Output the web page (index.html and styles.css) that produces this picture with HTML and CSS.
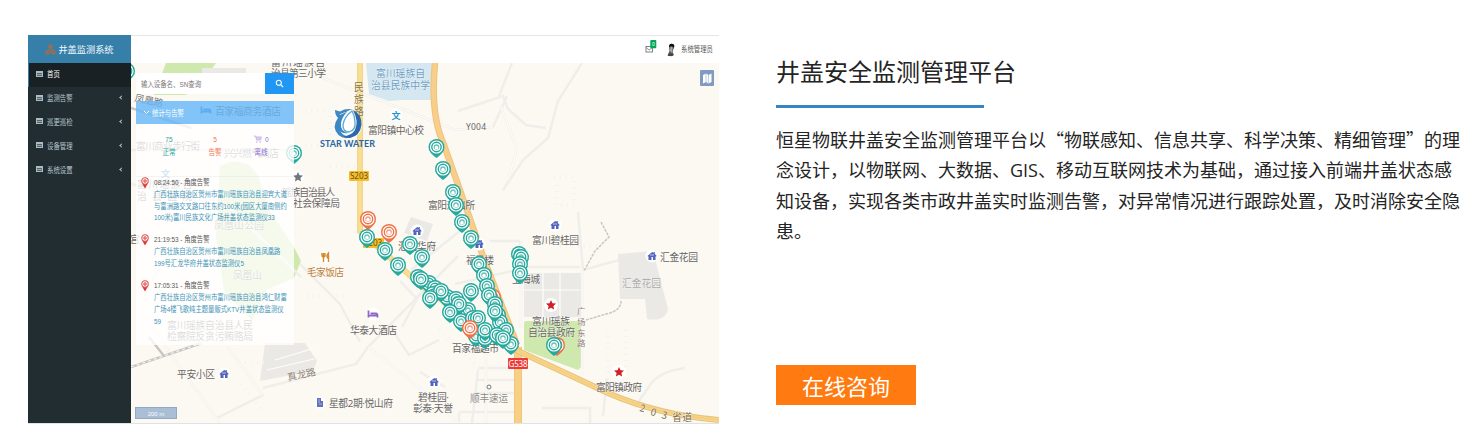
FILE: index.html
```html
<!DOCTYPE html>
<html lang="zh-CN">
<head>
<meta charset="utf-8">
<title>井盖安全监测管理平台</title>
<link rel="stylesheet" href="styles.css">
</head>
<body>
<main class="feature">
  <section class="dashboard">
    <aside class="sidebar">
      <div class="brand">
        <svg class="brand-icon" viewBox="0 0 12 12"><path d="M4.500 5V2.500a1.500 1.500 0 013 0V5M4.500 6L1.300 8.500a1.400 1.400 0 001.500 2.300L6 9M7.500 6l3.200 2.500a1.400 1.400 0 01-1.500 2.300L6 9" fill="none" stroke="#b8693a" stroke-width="1.300"/><path d="M6 3v4l-3 2M6 7l3 2" fill="none" stroke="#b8693a"/></svg>
        <span>井盖监测系统</span>
      </div>
      <nav class="menu">
        <a class="item active"><i class="table-icon"></i><span class="item-label">首页</span></a>
        <a class="item"><i class="table-icon"></i><span class="item-label">监测告警</span><i class="caret"></i></a>
        <a class="item"><i class="table-icon"></i><span class="item-label">巡更巡检</span><i class="caret"></i></a>
        <a class="item"><i class="table-icon"></i><span class="item-label">设备管理</span><i class="caret"></i></a>
        <a class="item"><i class="table-icon"></i><span class="item-label">系统设置</span><i class="caret"></i></a>
      </nav>
    </aside>
    <div class="content">
      <header class="topbar">
        <svg class="mail" viewBox="0 0 12 14"><rect x="1" y="6.500" width="6.500" height="5.500" fill="#fff" stroke="#777" stroke-width=".9"/><path d="M1 7.500l3.200 2.500 3.300-2.500" fill="none" stroke="#777" stroke-width=".8"/><rect x="5.300" y="0" width="6" height="8.200" rx="1" fill="#00a65a"/><text x="8.300" y="6" class="badge">0</text></svg>
        <svg class="avatar" viewBox="0 0 10 14"><path d="M3 3Q4 0 7 1.200Q9 3 7.500 6L6.500 9L8 12Q6 14 1.500 12.500L3.500 8z" fill="#555"/><path d="M3 4Q3 .2 7 1Q9 2 8 4.500L5.500 3z" fill="#111"/><path d="M4.500 4h2v3l-1 3-1.500-2z" fill="#aaa"/><path d="M2 12h5" stroke="#333"/></svg>
        <span class="user">系统管理员</span>
      </header>
      <div class="map-area">
        <svg class="map" viewBox="131 63 588 360" preserveAspectRatio="none">
          <defs>
            <g id="pin"><path d="M-7.700 2Q-6 6.800 0 11Q6 6.800 7.700 2z" fill="currentColor"/><circle r="8" fill="currentColor"/><circle r="6" fill="none" stroke="#fff" stroke-width="1.200"/><circle r="3.400" fill="#fff" fill-opacity=".3" stroke="#fff" stroke-width="1.200"/><path d="M-1.600 2.200V.3a1.600 1.600 0 013.200 0v1.900z" fill="#fff"/></g>
            <g id="home"><circle r="6.500" fill="#fff"/><path d="M-4.300-.3L.2-4l1.300 1V-4h1.300v2L4.400-.5v1H3.500V4H1V1h-1.500v3h-3V.6h-.8z" fill="#5365bb"/><path d="M-2-1h4" stroke="#fff" stroke-width=".6"/></g>
            <path id="star" d="M0-5l1.500 3.200 3.500.4-2.600 2.400.7 3.600L0 2.800-3.100 4.600l.7-3.600L-5-1.400l3.500-.4z"/>
            <g id="bed"><circle r="6.500" fill="#fff"/><path d="M-4.500-3.500v7M-4.500 1.700h9v1.800M-2.500-.5H3q1.500 0 1.500 2" fill="none" stroke="currentColor" stroke-width="1.800"/></g>
          </defs>
          <rect x="131" y="63" width="588" height="361" fill="#fcf9f2"/>
          <g fill="#cfe8ad">
            <path d="M166 63h50l-10 14-20 18h-32z"/>
            <path d="M220 166q25-12 38 10l12 35 24 36 7 14-7 17-28 12-14 31-28-30-8-54z"/>
            <path d="M526 321h53q3 0 3 3v42l-4 4-54-20v-26q0-3 2-3z"/>
          </g>
          <g fill="#eae9e5">
            <path d="M265 343h40l12 18-4 10-53 10z"/>
            <path d="M524 273h57v44h-57zM618 254l35-3 15 58q-2 13-21 10l-2-20h-25zM411 217l22 7-6 17-23-8z"/>
            <path d="M202 68h44v22h-44z"/>
          </g>
          <path d="M366 63h66v37l-30 0-13 1-20-7z" fill="#d5e7f0"/>
          <g fill="none" stroke="#f0eeea" stroke-width="2.500">
            <path d="M131 184l100 25 70 68M150 325l70 98M227 346l36 49-46 23M263 388l93-24 12-17 90-91M368 347l51 40 40 36M300 264l40 40 20 38M320 77l95 37 40 16 38-3 14-31M458 111l45-15 5 13 18 16 20 3M582 63l-24 38-10 37-25 22-20 30M499 96l13-33M500 105l17 43-8 30M578 212l5 58 36-10M490 241h30v26h60M521 240v88M582 270v105M455 284l66-15M411 270l50-40M131 150h160M152 280l32-50"/>
            <path d="M486 330v93M478 370l-6 53M478 368h38M478 380h38M473 393h43M459 412h55M459 412v11M542 408h48v15M603 416l4-38M635 407l15-22q10-14 35-17M400 281l17 18-15 28M389 325l20 30 30-15M420 372l25 15"/>
          </g>
          <g fill="none" stroke="#fefdfb" stroke-width="1.200">
            <path d="M150 325l70 98M227 346l36 49M368 347l51 40 40 36M320 77l95 37 40 16 38-3M500 105l17 43-8 30M521 240v88M582 270v105M524 290h56M543 273v44M560 273v44M486 330v93M275 360l40-12M267 370l47-11"/>
          </g>
          <g fill="none" stroke="#f4f3ef" stroke-width="4" stroke-dasharray="1 5">
            <path d="M554 177h20v28h-17v-25M305 111h25v35h-30M330 166h36M307 296h42M245 363h20M240 385l22 25M608 330v50M626 330v60M560 246h40M439 330l40 38"/>
          </g>
          <path d="M131 367l71-24M149 337l15 19M131 108l60 20" fill="none" stroke="#c8c6c3" stroke-width="2.400"/>
          <path d="M131 367l71-24" fill="none" stroke="#f4f4f4" stroke-width="1.200" stroke-dasharray="3 3"/>
          <path d="M601 222l8 15-14 14-11 20M586 320l20-6q15-3 15-13" fill="none" stroke="#c9c7c4" stroke-width="1.500" stroke-dasharray="3 1"/>
          <path d="M360 63v170M360 231l63 56 92 64" fill="none" stroke="#efd591" stroke-width="6"/>
          <path d="M360 63v170M360 231l63 56 92 64" fill="none" stroke="#f9dd91" stroke-width="4"/>
          <path d="M435 63Q430 115 444 145Q465 204 485 262L517 345" fill="none" stroke="#efc27c" stroke-width="6.500"/>
          <path d="M435 63Q430 115 444 145Q465 204 485 262L517 345" fill="none" stroke="#f8ce8a" stroke-width="4.500"/>
          <path d="M518 347v77" stroke="#efc67e" stroke-width="8"/><path d="M518 347v77" stroke="#f9cf86" stroke-width="6"/>
          <path d="M516 350l92 43q50 22 111 27" fill="none" stroke="#e8c37a" stroke-width="6"/>
          <path d="M516 350l92 43q50 22 111 27" fill="none" stroke="#f9d58a" stroke-width="4"/>
          <path d="M516 350l92 43q50 22 111 27" fill="none" stroke="#ecc67a" stroke-width=".7"/>
          <g class="road-shield"><rect x="349" y="171" width="20" height="10" rx="1" fill="#f5bd28"/><text x="359" y="179.300" textLength="18" fill="#68501c">S203</text><rect x="363" y="238" width="21" height="10" rx="1" fill="#f5bd28"/><text x="373" y="246.300" textLength="18" fill="#68501c">S203</text><rect x="508" y="358" width="20" height="11" rx="1" fill="#ed3838"/><text x="518" y="366.700" textLength="19" fill="#fff">G538</text></g>
          <g class="poi">
            <text x="271" y="66" textLength="54">富川瑶族自</text><text x="271" y="77" textLength="55">治县第三小学</text>
            <g fill="#6d9fc4"><text x="376" y="76.500" textLength="49">富川瑶族自</text><text x="371" y="88.500" textLength="59">治县民族中学</text></g>
            <g fill="#8b743c"><text x="354" y="91">民</text><text x="354" y="102.500">族</text><text x="354" y="114.500">路</text></g>
            <text x="368" y="133.500" textLength="56">富阳镇中心校</text>
            <text x="466" y="130" textLength="20" class="latin">Y004</text>
            <text x="282" y="195.500" textLength="53">瑶族自治县人</text><text x="293" y="207" textLength="47">社会保障局</text>
            <text x="428" y="209" textLength="47">富阳派出所</text>
            <text x="398" y="250" textLength="38">汇龙华府</text>
            <text x="466" y="264" textLength="28">福景楼</text>
            <text x="307" y="275.500" textLength="37" fill="#bd7e39">毛家饭店</text>
            <text x="532" y="244" textLength="47">富川碧桂园</text>
            <text x="660" y="260.500" textLength="38">汇金花园</text>
            <text x="622" y="287" textLength="39" fill="#aaa9a7">汇金花园</text>
            <text x="512" y="282.500" textLength="28">上海城</text>
            <text x="532" y="324.500" textLength="38">富川瑶族</text><text x="528" y="336" textLength="47">自治县政府</text>
            <g fill="#94817b" class="small"><text x="577" y="314">广</text><text x="577" y="325">场</text><text x="577" y="336">东</text><text x="577" y="346">路</text></g>
            <text x="452" y="352" textLength="47">百家福超市</text>
            <text x="350" y="333.500" textLength="47">华泰大酒店</text>
            <text x="177" y="378" textLength="38">平安小区</text>
            <text x="329" y="407" textLength="64" class="mixed">星都2期·悦山府</text>
            <text x="418" y="401" textLength="31" class="mixed">碧桂园·</text><text x="413" y="412" textLength="40" class="mixed">彰泰·天誉</text>
            <text x="470" y="402" textLength="38" fill="#8d8b89">顺丰速运</text>
            <text x="596" y="391" textLength="46">富阳镇政府</text>
            <text x="288" y="381" textLength="29" fill="#8f8277" transform="rotate(-12 288 381)">真龙路</text>
            <g fill="#7b6b45"><text x="639" y="411" transform="rotate(14 639 411)">2</text><text x="650" y="415" transform="rotate(14 650 415)">0</text><text x="661" y="418" transform="rotate(14 661 418)">3</text><text x="672" y="421" textLength="20">省道</text></g>
            <text x="134" y="101" textLength="29" transform="rotate(12 134 101)" fill="#77716c">凤凰路</text>
            <text x="215" y="115" textLength="66">百家福商务酒店</text><text x="136" y="150" textLength="64">富川商业步行街</text><text x="224" y="157" textLength="55">兴兴燃气商店</text>
            <text x="130" y="243">宫</text><text x="214" y="229" textLength="50">凤凰山公园</text><text x="233" y="279" textLength="29">凤凰山</text>
            <text x="137" y="188" textLength="55">富川瑶族自</text><text x="137" y="200" textLength="55">治县医院</text>
            <text x="167" y="329" textLength="86">富川瑶族自治县人民</text><text x="167" y="340" textLength="86">检察院反贪污贿赂局</text>
          </g>
          <circle cx="396" cy="115" r="6.500" fill="#fff"/><text x="391.500" y="119" class="school">文</text>
          <text x="161" y="177" class="school">文</text>
          <use href="#home" x="417" y="231"/><use href="#home" x="479" y="244"/><use href="#home" x="555" y="225"/><use href="#home" x="652" y="256"/><use href="#home" x="224" y="374"/><use href="#home" x="434" y="382"/>
          <g color="#9166c7"><use href="#bed" x="373" y="314"/></g><g color="#3974b5"><use href="#bed" x="206" y="110"/></g>
          <circle cx="551" cy="305" r="7" fill="#fff"/><use href="#star" x="551" y="305" fill="#d02028"/><circle cx="619" cy="372" r="7" fill="#fff"/><use href="#star" x="619" y="372" fill="#d02028"/><circle cx="298" cy="177" r="6.500" fill="#fff"/><use href="#star" x="298" y="177" fill="#70777b"/>
          <circle cx="320" cy="403" r="6" fill="#fff"/><path d="M317 407v-9h4v3h2v6z" fill="#6471b8"/><path d="M318 400h2M318 402h2M319 404h3" stroke="#d9e2ff" stroke-width=".6"/>
          <circle cx="489" cy="387" r="2" fill="#fff" stroke="#777"/>
          <circle cx="326" cy="257" r="6.500" fill="#fff"/><path d="M322 253v3q1.500 2 3 0v-3M323.500 253v9M328.500 262v-9q-3 3 0 6" fill="none" stroke="#d9892c" stroke-width="1.400"/>
          <g transform="translate(334 109)">
            <path d="M15 4a12.500 12.500 0 010 25.500a12.500 12.500 0 010-25.500" fill="#f8fbfd"/>
            <path d="M1 1L6 2.500Q12-1 19 .5Q14 1 12.500 3Q6 4 3.500 8Q1 6 1 1z" fill="#3f8ac2"/>
            <path d="M4 9Q2 7 3 4.500L6 6Q10 4 13 3Q8 8 7 14Q6 22 14 24Q9 25 6 22Q10 28 17 28Q10 31 4.500 26Q-3 18 4 9z" fill="#3a88c4"/>
            <path d="M19 1Q28 5 27.500 16Q26 27 16 29Q12 29 9 27Q17 27 21 21Q25 12 19 1z" fill="#2c69aa"/>
            <path d="M18 2Q10 8 9 16Q9 23 15 23Q22 21 21 13Q21 7 18 2z" fill="#fff" stroke="#5aa8d8" stroke-width="1.300"/>
          </g>
          <text x="320" y="146.500" textLength="55" lengthAdjust="spacingAndGlyphs" class="logo-text">STAR WATER</text>
          <g color="#ef7248"><use href="#pin" x="368" y="219"/><use href="#pin" x="389" y="232"/><use href="#pin" x="557" y="345"/><use href="#pin" x="493" y="297"/></g>
          <g color="#27a99d">
            <use href="#pin" x="127" y="71"/><use href="#pin" x="294" y="153"/>
            <use href="#pin" x="436.500" y="147"/><use href="#pin" x="443" y="169"/><use href="#pin" x="453" y="192"/><use href="#pin" x="456" y="205"/><use href="#pin" x="462" y="222"/><use href="#pin" x="471" y="238"/>
            <use href="#pin" x="367" y="237"/><use href="#pin" x="385" y="250"/><use href="#pin" x="410" y="244"/><use href="#pin" x="422" y="257"/><use href="#pin" x="398" y="265"/>
            <use href="#pin" x="519" y="254"/><use href="#pin" x="521" y="257"/><use href="#pin" x="520" y="264"/><use href="#pin" x="520" y="273"/>
            <use href="#pin" x="479" y="264"/><use href="#pin" x="484" y="275"/><use href="#pin" x="487" y="286"/><use href="#pin" x="489" y="295"/>
            <use href="#pin" x="418" y="277"/><use href="#pin" x="429" y="283"/><use href="#pin" x="421" y="279"/><use href="#pin" x="435" y="288"/><use href="#pin" x="433" y="294"/><use href="#pin" x="447" y="297"/><use href="#pin" x="441" y="291"/><use href="#pin" x="430" y="298"/><use href="#pin" x="456" y="299"/><use href="#pin" x="471" y="291"/>
            <use href="#pin" x="468" y="310"/><use href="#pin" x="459" y="304"/><use href="#pin" x="450" y="312"/><use href="#pin" x="461" y="321"/><use href="#pin" x="473" y="318"/><use href="#pin" x="478" y="318"/>
            <use href="#pin" x="495" y="304"/><use href="#pin" x="498" y="315"/><use href="#pin" x="500" y="322"/><use href="#pin" x="495" y="311"/>
            <use href="#pin" x="476" y="336"/><use href="#pin" x="485" y="338"/><use href="#pin" x="485" y="330"/><use href="#pin" x="506" y="330"/><use href="#pin" x="497" y="335"/><use href="#pin" x="511" y="344"/><use href="#pin" x="503" y="338"/>
          </g>
          <g color="#ef7248"><use href="#pin" x="470" y="328"/></g><g color="#27a99d"><use href="#pin" x="554" y="345"/></g>
          <rect x="135.500" y="407.500" width="41" height="11" fill="#aabed5" stroke="#92a9c5"/><text x="156" y="415.500" text-anchor="middle" class="scale">200 m</text>
          <rect x="700" y="70" width="14" height="16" rx="1" fill="#819bc0"/><path d="M703 75l3-1.500 2.500 1.500 3-1.500v8.500l-3 1.500-2.500-1.500-3 1.500z" fill="#fff"/><path d="M706 74v8M708.500 75v8" stroke="#819bc0" stroke-width=".5"/>
        </svg>
        <div class="overlay">
          <div class="search"><div class="search-input"><span class="squeeze">输入设备名、SN查询</span></div><div class="search-button"><svg viewBox="0 0 10 10"><circle cx="4.200" cy="4.200" r="2.800" fill="none" stroke="#fff" stroke-width="1.200"/><path d="M6.300 6.300L9 9" stroke="#fff" stroke-width="1.400"/></svg></div></div>
          <div class="panel-title"><svg viewBox="0 0 7 5"><path d="M1 1l2.500 2.500L6 1" fill="none" stroke="#fff"/></svg><span class="squeeze">统计与告警</span></div>
          <div class="panel-body">
            <div class="stats">
              <div class="stat normal"><span>75</span><span>正常</span></div>
              <div class="stat alarm"><span>5</span><span>告警</span></div>
              <div class="stat offline"><span><svg class="cart" viewBox="0 0 10 8"><path d="M0 1h2l1 4h5l1-3H2.500" fill="#ddd0f5" stroke="#c5b4e8"/><circle cx="3.500" cy="7" r=".8" fill="#b69ee2"/><circle cx="7.500" cy="7" r=".8" fill="#b69ee2"/></svg>0</span><span>离线</span></div>
            </div>
            <div class="alerts">
              <article class="alert"><svg class="alert-pin" viewBox="0 0 8 12"><path d="M.8 6L4 11.500 7.200 6z" fill="#d83b35"/><circle cx="4" cy="4" r="3.200" fill="#fff" stroke="#e0524c" stroke-width="1.100"/><circle cx="4" cy="4" r="1.500" fill="#e88480" stroke="#c94742" stroke-width=".5"/></svg><div class="alert-text"><h3>08:24:50 - 角度告警</h3><p>广西壮族自治区贺州市富川瑶族自治县迎宾大道<br>与富洲路交叉路口往东约100米(园区大厦南侧约<br>100米)富川民族文化广场井盖状态监测仪33</p></div></article>
              <article class="alert"><svg class="alert-pin" viewBox="0 0 8 12"><path d="M.8 6L4 11.500 7.200 6z" fill="#d83b35"/><circle cx="4" cy="4" r="3.200" fill="#fff" stroke="#e0524c" stroke-width="1.100"/><circle cx="4" cy="4" r="1.500" fill="#e88480" stroke="#c94742" stroke-width=".5"/></svg><div class="alert-text"><h3>21:19:53 - 角度告警</h3><p>广西壮族自治区贺州市富川瑶族自治县凤凰路<br>199号汇龙华府井盖状态监测仪5</p></div></article>
              <article class="alert"><svg class="alert-pin" viewBox="0 0 8 12"><path d="M.8 6L4 11.500 7.200 6z" fill="#d83b35"/><circle cx="4" cy="4" r="3.200" fill="#fff" stroke="#e0524c" stroke-width="1.100"/><circle cx="4" cy="4" r="1.500" fill="#e88480" stroke="#c94742" stroke-width=".5"/></svg><div class="alert-text"><h3>17:05:31 - 角度告警</h3><p>广西壮族自治区贺州市富川瑶族自治县鸿仁财富<br>广场4楼飞歌纯主题量贩式KTV井盖状态监测仪<br>59</p></div></article>
            </div>
          </div>
        </div>
      </div>
    </div>
  </section>
  <section class="intro">
    <h1>井盖安全监测管理平台</h1>
    <div class="rule"></div>
    <p class="description">恒星物联井盖安全监测管理平台以“物联感知、信息共享、科学决策、精细管理”的理念设计，以物联网、大数据、<span class="abbr">GIS</span>、移动互联网技术为基础，通过接入前端井盖状态感知设备，实现各类市政井盖实时监测告警，对异常情况进行跟踪处置，及时消除安全隐患。</p>
    <a class="consult">在线咨询</a>
  </section>
</main>
</body>
</html>
```
FILE: styles.css
```css
* { box-sizing: border-box; }
body { margin: 0; background: #fff; font-family: "Noto Sans CJK SC", sans-serif; overflow: hidden; }
.feature { display: flex; height: 448px; padding: 35px 0 0 28px; }
.dashboard { display: flex; width: 691px; height: 389px; border-top: 1px solid #e4e6e7; border-bottom: 1px solid #dfe3e8; font-family: "Liberation Sans", "Noto Sans CJK SC", sans-serif; }
.sidebar { width: 103px; margin-top: -1px; background: #222d32; }
.brand { display: flex; align-items: center; justify-content: center; gap: 2px; height: 28px; background: #367fa9; color: #f4faff; font-size: 9.2px; }
.brand-icon { width: 11px; height: 11px; }
.item { display: flex; align-items: center; height: 23.8px; padding: 0 8px 2px 8px; color: #b8c7ce; font-size: 8px; }
.item.active { background: #1a2125; color: #fff; box-shadow: inset 1px 0 #367fa9; }
.item-label { flex: 1; margin-left: 4px; transform: scaleX(.8); transform-origin: left; }
.table-icon { width: 7px; height: 6px; border: 1px solid #aebbc1; border-top-width: 2px; background: repeating-linear-gradient(#56646b 0 1px, #93a1a8 1px 2px); }
.caret { width: 3px; height: 3px; border-left: 1px solid #b8c7ce; border-bottom: 1px solid #b8c7ce; transform: rotate(45deg); }
.content { flex: 1; min-width: 0; }
.topbar { display: flex; align-items: center; justify-content: flex-end; height: 27px; padding-right: 6px; background: #fff; }
.mail { width: 12px; height: 14px; margin-right: 9px; margin-bottom: 5px; }
.badge { fill: #fff; font-size: 5px; text-anchor: middle; }
.avatar { width: 10px; height: 14px; margin-right: 5px; }
.user { width: 32px; padding-bottom: 2px; color: #555; font-size: 8px; white-space: nowrap; transform: scaleX(.8); transform-origin: left; }
.map-area { position: relative; height: 360px; overflow: hidden; }
.map { display: block; width: 100%; height: 360px; }
.poi { font-family: "Noto Sans CJK SC", sans-serif; font-size: 9.8px; fill: #686563; paint-order: stroke; stroke: rgba(255, 255, 255, .6); stroke-width: .8px; }
.latin { font-family: "Noto Sans", sans-serif; font-size: 8.5px; }
.mixed { font-family: "Noto Sans", "Noto Sans CJK SC", sans-serif; }
.small { font-size: 8.5px; }
.school { fill: #2995cc; font-size: 9px; font-weight: 700; }
.road-shield { font-family: "Noto Sans", sans-serif; font-size: 8px; text-anchor: middle; }
.logo-text { fill: #2b65a5; font-family: Lato, sans-serif; font-size: 9px; font-weight: 700; }
.scale { fill: #f8fbff; font-family: "Liberation Sans", sans-serif; font-size: 6px; }
.overlay { position: absolute; left: 5px; top: 10px; width: 158px; }
.search { display: flex; height: 21px; background: #fff; }
.search-input { display: flex; align-items: center; flex: 1; padding-left: 5px; color: #777; font-size: 8px; }
.search-button { display: flex; align-items: center; justify-content: center; width: 29px; background: #2196f3; }
.search-button svg { width: 9px; height: 9px; }
.squeeze { white-space: nowrap; transform: scaleX(.8); transform-origin: left; }
.panel-title { display: flex; align-items: center; gap: 2px; height: 23px; margin-top: 7px; padding-left: 7px; background: rgba(103, 184, 249, .82); color: #fff; font-size: 8px; }
.panel-title svg { width: 7px; height: 5px; }
.panel-body { height: 221px; background: rgba(255, 255, 255, .78); }
.stats { display: grid; grid-template-columns: 66px 26px 66px; height: 53px; padding-top: 9px; border-bottom: 1px solid rgba(220, 220, 220, .3); }
.stat { display: flex; flex-direction: column; align-items: center; font-size: 8px; line-height: 13.3px; transform: scaleX(.82); }
.normal { color: #26a69a; }
.alarm { color: #f07550; }
.offline { color: #9270d6; }
.cart { width: 11px; height: 8px; margin-right: 3px; vertical-align: -1px; }
.alerts { padding-left: 5px; }
.alert { display: flex; align-items: flex-start; gap: 5px; margin-bottom: 10.3px; }
.alert-pin { flex: none; width: 8px; height: 12px; }
.alert-text { width: 180px; font-size: 8px; line-height: 11.8px; transform: scaleX(.79); transform-origin: left; white-space: nowrap; }
.alert h3 { margin: 0; color: #555; font-size: 8px; font-weight: 400; }
.alert p { margin: 0; color: #3b93ba; }
.intro { width: 692px; margin-left: 57px; color: #242424; }
.intro h1 { margin: 18px 0 0; font-size: 24px; font-weight: 400; line-height: 35px; }
.rule { width: 208px; height: 3px; margin-top: 17px; background: #3685c2; }
.description { height: 120px; margin: 16px 0 0; font-size: 18px; line-height: 30px; }
.abbr { font-family: "Open Sans", sans-serif; }
.consult { display: block; width: 140px; height: 40px; margin-top: 121px; background: #ff7a10; color: #fff; font-size: 22px; line-height: 40px; text-align: center; }
```
